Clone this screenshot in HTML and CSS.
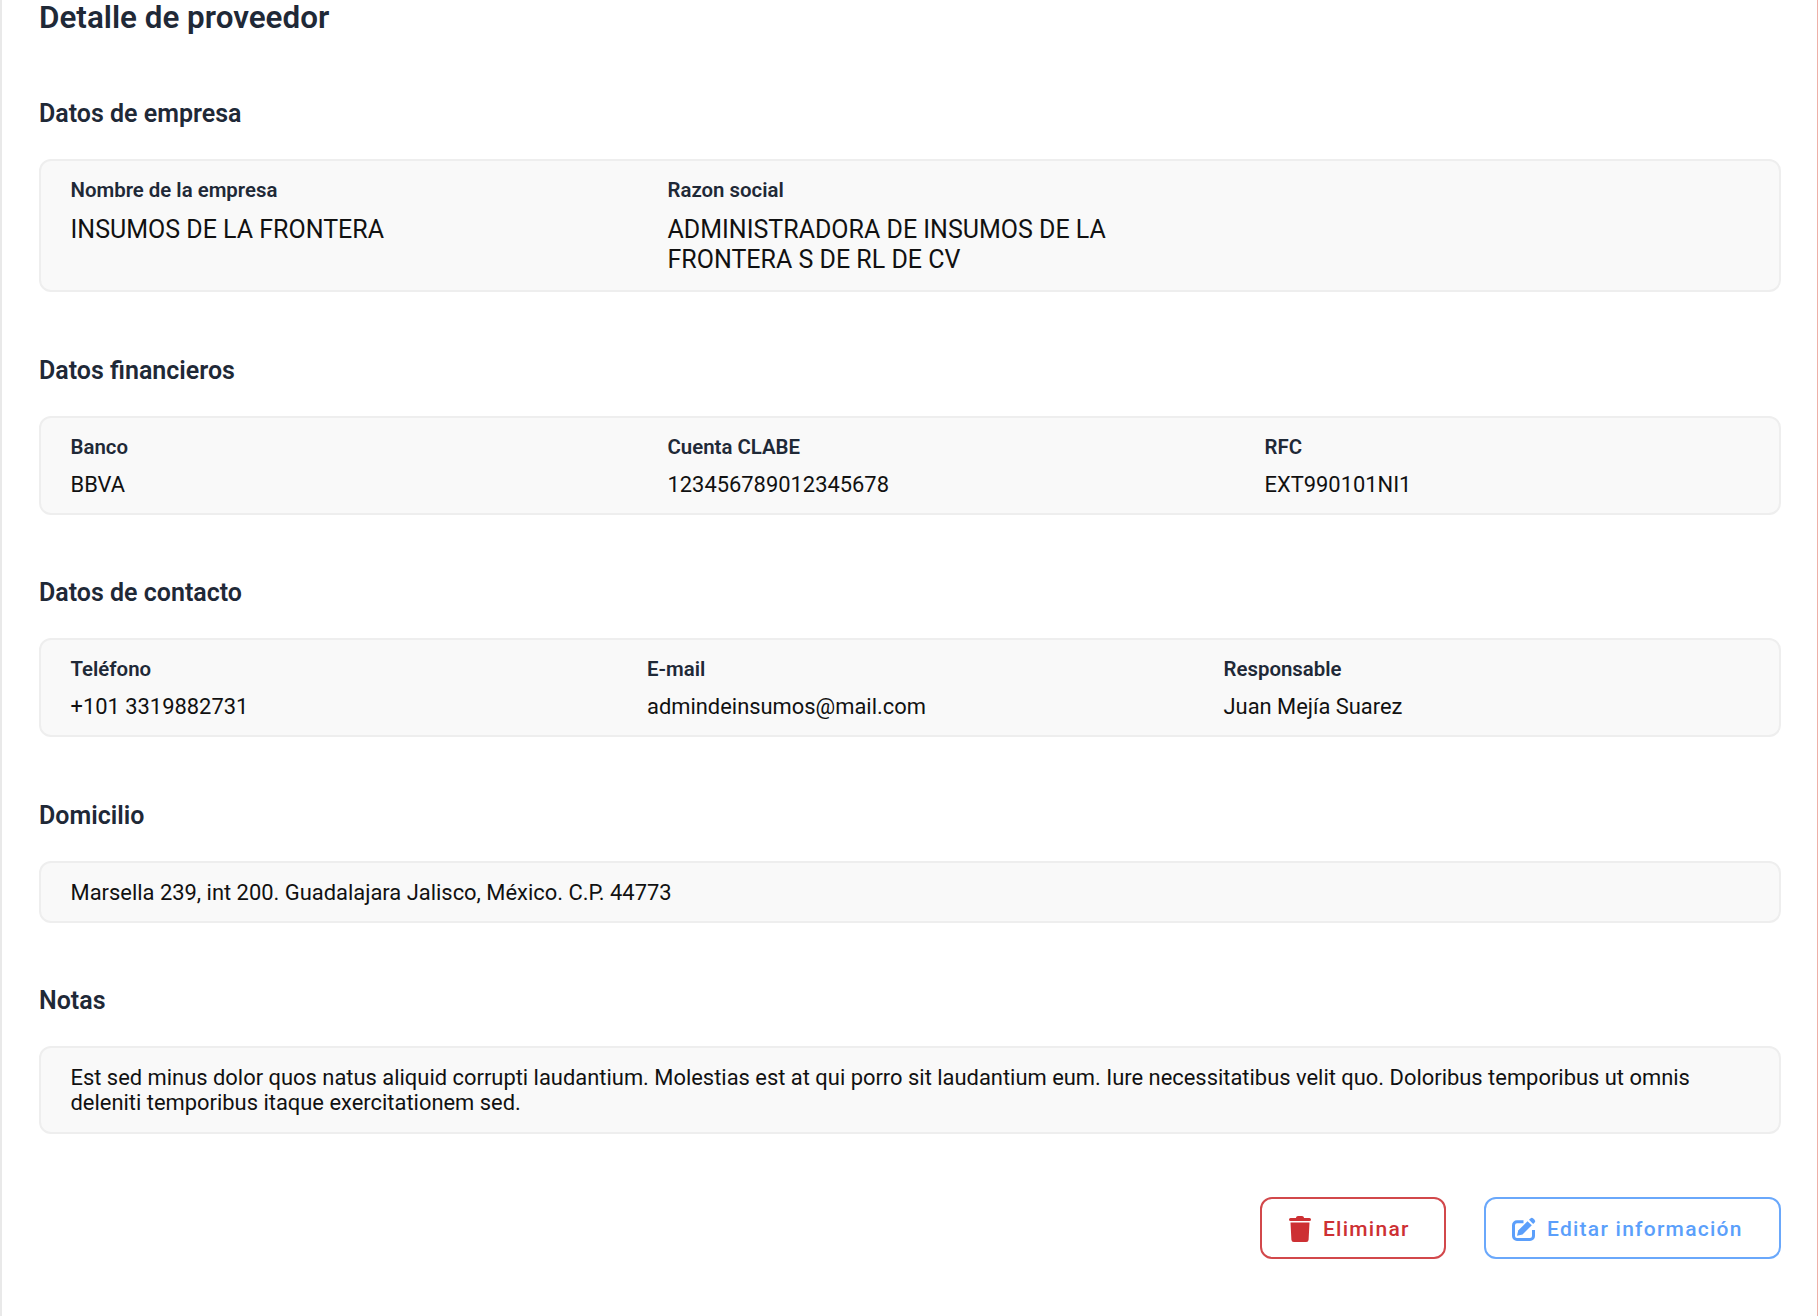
FILE: index.html
```html
<!DOCTYPE html>
<html lang="es">
<head>
<meta charset="utf-8">
<title>Detalle de proveedor</title>
<link rel="stylesheet" href="styles.css">
</head>
<body>
<main class="page">
  <h1 class="title">Detalle de proveedor</h1>

  <section class="section section-first">
    <h2 class="heading">Datos de empresa</h2>
    <div class="card grid grid-wide card-tall">
      <div class="field">
        <div class="label label-large">Nombre de la empresa</div>
        <div class="value value-large">INSUMOS DE LA FRONTERA</div>
      </div>
      <div class="field">
        <div class="label label-large">Razon social</div>
        <div class="value value-large value-wrap">ADMINISTRADORA DE INSUMOS DE LA FRONTERA S DE RL DE CV</div>
      </div>
    </div>
  </section>

  <section class="section">
    <h2 class="heading">Datos financieros</h2>
    <div class="card grid grid-wide">
      <div class="field">
        <div class="label">Banco</div>
        <div class="value">BBVA</div>
      </div>
      <div class="field">
        <div class="label">Cuenta CLABE</div>
        <div class="value">123456789012345678</div>
      </div>
      <div class="field">
        <div class="label">RFC</div>
        <div class="value">EXT990101NI1</div>
      </div>
    </div>
  </section>

  <section class="section">
    <h2 class="heading">Datos de contacto</h2>
    <div class="card grid grid-narrow">
      <div class="field">
        <div class="label">Teléfono</div>
        <div class="value">+101 3319882731</div>
      </div>
      <div class="field">
        <div class="label">E-mail</div>
        <div class="value">admindeinsumos@mail.com</div>
      </div>
      <div class="field">
        <div class="label">Responsable</div>
        <div class="value">Juan Mejía Suarez</div>
      </div>
    </div>
  </section>

  <section class="section">
    <h2 class="heading">Domicilio</h2>
    <div class="card card-text">
      <p class="text">Marsella 239, int 200. Guadalajara Jalisco, México. C.P. 44773</p>
    </div>
  </section>

  <section class="section">
    <h2 class="heading">Notas</h2>
    <div class="card card-text card-notes">
      <p class="text">Est sed minus dolor quos natus aliquid corrupti laudantium. Molestias est at qui porro sit laudantium eum. Iure necessitatibus velit quo. Doloribus temporibus ut omnis deleniti temporibus itaque exercitationem sed.</p>
    </div>
  </section>

  <div class="actions">
    <button class="btn btn-danger" type="button">
      <svg class="icon icon-trash" viewBox="0 0 22 26" fill="currentColor" aria-hidden="true"><path d="M7 2c0-1.100.9-2 2-2h4c1.100 0 2 .9 2 2h5.500a1.500 1.500 0 0 1 0 3H1.500a1.500 1.500 0 0 1 0-3z"/><path d="M1.500 6.500h19l-.9 17.200a2.400 2.400 0 0 1-2.400 2.300H4.800a2.400 2.400 0 0 1-2.400-2.300z"/></svg>
      <span>Eliminar</span>
    </button>
    <button class="btn btn-primary" type="button">
      <svg class="icon icon-edit" viewBox="0 0 24 24" aria-hidden="true"><path fill="none" stroke="currentColor" stroke-width="3" d="M11.500 4.800H5A3.500 3.500 0 0 0 1.500 8.300V19A3.500 3.500 0 0 0 5 22.500h13a3.500 3.500 0 0 0 3.500-3.500V13"/><path fill="currentColor" d="M5 18.700l1.200-5.200 9.300-9.300 4.300 4.100-9.300 9.200z"/><path fill="currentColor" d="M17 2.800l1.400-1.400a2 2 0 0 1 2.800 0l1.400 1.400a2 2 0 0 1 0 2.800l-1.400 1.400z"/></svg>
      <span>Editar información</span>
    </button>
  </div>
</main>
</body>
</html>
```

FILE: styles.css
```css
* { box-sizing: border-box; }

html, body { margin: 0; background: #fff; }

body {
  font-family: Roboto, "Liberation Sans", sans-serif;
  color: #1f2937;
  height: 1316px;
  overflow: hidden;
}

.page {
  height: 1316px;
  margin-right: 1px;
  padding: 1px 36px 0 37px;
  border-left: 2px solid #e9e9e9;
  box-shadow: 1px 0 0 #eeb0a8;
}

.title {
  margin: 0;
  font-size: 31.4px;
  line-height: 34px;
  font-weight: 600;
  color: #1f2937;
}

.section { margin-top: 62.5px; }
.section-first { margin-top: 63px; }

.heading {
  margin: 0 0 29px;
  font-size: 25px;
  line-height: 32px;
  font-weight: 600;
  color: #1f2937;
}

.card {
  background: #f9f9f9;
  border: 2px solid #eeeeee;
  border-radius: 12px;
  padding: 17px 30px 13px 29.5px;
}

.grid { display: grid; }
.grid-wide { grid-template-columns: repeat(3, 597px); }
.grid-narrow { grid-template-columns: repeat(3, 576.5px); }
.card-tall { padding-bottom: 15px; }

.label {
  font-size: 20.4px;
  line-height: 24px;
  font-weight: 600;
  color: #1f2937;
  margin-bottom: 11px;
}

.label-large { margin-bottom: 13px; }

.value {
  font-size: 21.9px;
  line-height: 30px;
  color: #111;
}

.value-large { font-size: 25px; }
.value-wrap { max-width: 470px; }

.card-text { padding-top: 17px; padding-bottom: 16px; }
.card-notes { padding-bottom: 17px; }

.text {
  margin: 0;
  font-size: 21.92px;
  line-height: 25px;
  color: #111;
}

.actions {
  display: flex;
  justify-content: flex-end;
  gap: 38px;
  margin-top: 63px;
}

.btn {
  display: inline-flex;
  align-items: center;
  height: 62px;
  padding: 1px 0 0 27px;
  background: #fff;
  border: 2px solid;
  border-radius: 12px;
  font-family: inherit;
  font-size: 21px;
  font-weight: 500;
  letter-spacing: 1.25px;
  white-space: nowrap;
}

.icon { flex: none; }
.icon-trash { width: 22px; height: 26px; margin-right: 12px; }
.icon-edit { width: 24px; height: 24px; margin-right: 11px; }

.btn-danger { color: #cd3033; border-color: #d2484b; width: 186px; }
.btn-primary { color: #5b9ffb; border-color: #6aa8fb; width: 297px; padding-left: 26px; }
```
